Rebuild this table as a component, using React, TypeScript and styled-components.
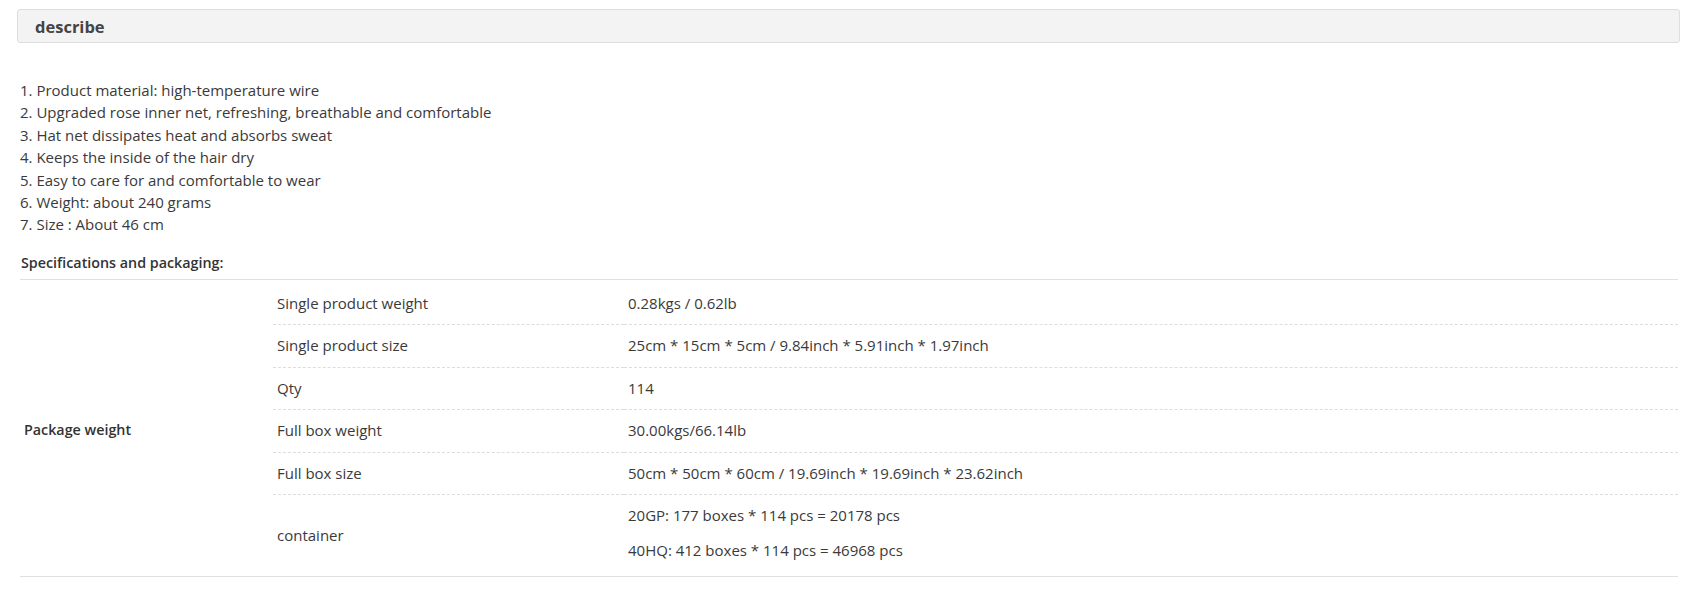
import styled, { createGlobalStyle } from 'styled-components';

const GlobalStyle = createGlobalStyle`
	html, body {
		margin: 0;
		padding: 0;
		background: #fff;
	}
	body {
		font-family: 'Open Sans', 'Liberation Sans', Arial, sans-serif;
		font-size: 15px;
		color: #333;
	}
`;

const Page = styled.div`
	padding: 9px 14px 0 17px;
`;

const TitleBar = styled.div`
	height: 32px;
	display: flex;
	align-items: center;
	padding: 0 17px;
	background: #f3f3f3;
	border: 1px solid #dedede;
	border-radius: 3px;

	h2 {
		margin: 0;
		font-size: 16.5px;
		font-weight: 700;
		color: #444;
	}
`;

const Content = styled.div`
	padding: 36px 2px 0 3px;
`;

const FeatureList = styled.div`
	line-height: 22.4px;
	color: #3a3a3a;
`;

const SectionTitle = styled.div`
	margin-top: 16px;
	padding: 0 1px 5px;
	font-size: 14.3px;
	font-weight: 600;
	line-height: 22px;
	color: #333;
	border-bottom: 1px solid #e0e0e0;
`;

const SpecTable = styled.table`
	width: 100%;
	margin-top: 3px;
	border-collapse: collapse;
	border-bottom: 1px solid #e0e0e0;

	td {
		padding: 10px 4px;
		line-height: 21.5px;
		vertical-align: middle;
		color: #3a3a3a;
	}
`;

const GroupCell = styled.td`
	width: 245px;
	font-size: 14.3px;
	font-weight: 600;
	color: #333 !important;
`;

const LabelCell = styled.td<{ $last?: boolean }>`
	width: 343px;
	border-bottom: ${(p) => (p.$last ? 'none' : '1px dashed #ddd')};
`;

const ValueCell = styled.td<{ $last?: boolean }>`
	border-bottom: ${(p) => (p.$last ? 'none' : '1px dashed #ddd')};
`;

const Lines = styled.div`
	display: flex;
	flex-direction: column;
	gap: 13px;
	padding-bottom: 5px;
`;

const features = [
	'1. Product material: high-temperature wire',
	'2. Upgraded rose inner net, refreshing, breathable and comfortable',
	'3. Hat net dissipates heat and absorbs sweat',
	'4. Keeps the inside of the hair dry',
	'5. Easy to care for and comfortable to wear',
	'6. Weight: about 240 grams',
	'7. Size : About 46 cm',
];

const specs: { label: string; values: string[] }[] = [
	{ label: 'Single product weight', values: ['0.28kgs / 0.62lb'] },
	{
		label: 'Single product size',
		values: ['25cm * 15cm * 5cm / 9.84inch * 5.91inch * 1.97inch'],
	},
	{ label: 'Qty', values: ['114'] },
	{ label: 'Full box weight', values: ['30.00kgs/66.14lb'] },
	{
		label: 'Full box size',
		values: ['50cm * 50cm * 60cm / 19.69inch * 19.69inch * 23.62inch'],
	},
	{
		label: 'container',
		values: [
			'20GP: 177 boxes * 114 pcs = 20178 pcs',
			'40HQ: 412 boxes * 114 pcs = 46968 pcs',
		],
	},
];

const App = () => {
	return (
		<>
			<GlobalStyle />
			<Page>
				<TitleBar>
					<h2>describe</h2>
				</TitleBar>
				<Content>
					<FeatureList>
						{features.map((f) => (
							<div key={f}>{f}</div>
						))}
					</FeatureList>
					<SectionTitle>Specifications and packaging:</SectionTitle>
					<SpecTable>
						<tbody>
							{specs.map((row, i) => {
								const last = i === specs.length - 1;
								return (
									<tr key={row.label}>
										{i === 0 && (
											<GroupCell rowSpan={specs.length}>Package weight</GroupCell>
										)}
										<LabelCell $last={last}>{row.label}</LabelCell>
										<ValueCell $last={last}>
											{row.values.length > 1 ? (
												<Lines>
													{row.values.map((v) => (
														<span key={v}>{v}</span>
													))}
												</Lines>
											) : (
												row.values[0]
											)}
										</ValueCell>
									</tr>
								);
							})}
						</tbody>
					</SpecTable>
				</Content>
			</Page>
		</>
	);
};

export default App;
